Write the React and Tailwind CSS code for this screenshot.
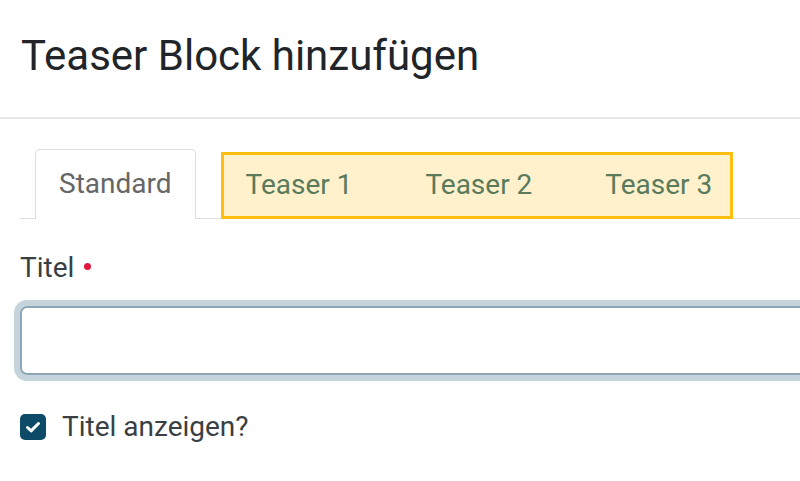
import { useState } from 'react';

const tabs = ['Teaser 1', 'Teaser 2', 'Teaser 3'];

const App = () => {
  const [showTitle, setShowTitle] = useState(true);

  return (
    <div className="w-[800px] h-[481px] overflow-hidden bg-white font-['Roboto',sans-serif]">
      {/* Modal header */}
      <div className="h-[119px] border-b-2 border-[#e4e8eb] pl-[21px] pt-[31px]">
        <h1 className="text-[42px] leading-[50px] text-[#212529] font-normal">Teaser Block hinzufügen</h1>
      </div>

      <div className="pl-5">
        {/* Tabs */}
        <div className="mt-[30px] flex items-end border-b border-[#dddddd]">
          <div className="ml-[15px] -mb-px border border-b-0 border-[#dddddd] rounded-t-[5px] bg-white px-[23px] pt-[18px] pb-[19px] text-[28px] leading-[32px] text-[#666666]">
            Standard
          </div>
          <div className="ml-[25px] -mb-px flex border-[3px] border-[#fcbf0f] bg-[#fff1cc] pl-[22px] pr-[18px] pt-[14px] pb-[15px] gap-[73px]">
            {tabs.map((t) => (
              <span key={t} className="text-[28px] leading-[32px] text-[#597b5c]">{t}</span>
            ))}
          </div>
        </div>

        {/* Titel field */}
        <label className="mt-[33px] flex items-center text-[28px] leading-[32px] text-[#3a3f44]">
          Titel
          <span className="ml-[10px] mb-[4px] w-[7px] h-[7px] rounded-full bg-[#e3173e]"></span>
        </label>
        <input
          type="text"
          className="mt-[22px] block w-[900px] h-[69px] rounded-[7px] border-2 border-[#8ca6b6] ring-[6px] ring-[#c5d4dc] outline-none"
        />

        {/* Checkbox */}
        <label className="mt-[36px] flex items-center gap-4 cursor-pointer" onClick={() => setShowTitle(!showTitle)}>
          <span className="w-[26px] h-[26px] rounded-[5px] bg-[#0c4a67] flex items-center justify-center">
            {showTitle && (
              <svg width="18" height="18" viewBox="0 0 18 18" fill="none">
                <path d="M3.5 9.5l3.6 3.4L14.5 5.5" stroke="white" strokeWidth="3" strokeLinecap="round" strokeLinejoin="round" />
              </svg>
            )}
          </span>
          <span className="text-[28px] leading-[32px] text-[#3a3f44]">Titel anzeigen?</span>
        </label>
      </div>
    </div>
  );
};

export default App;
